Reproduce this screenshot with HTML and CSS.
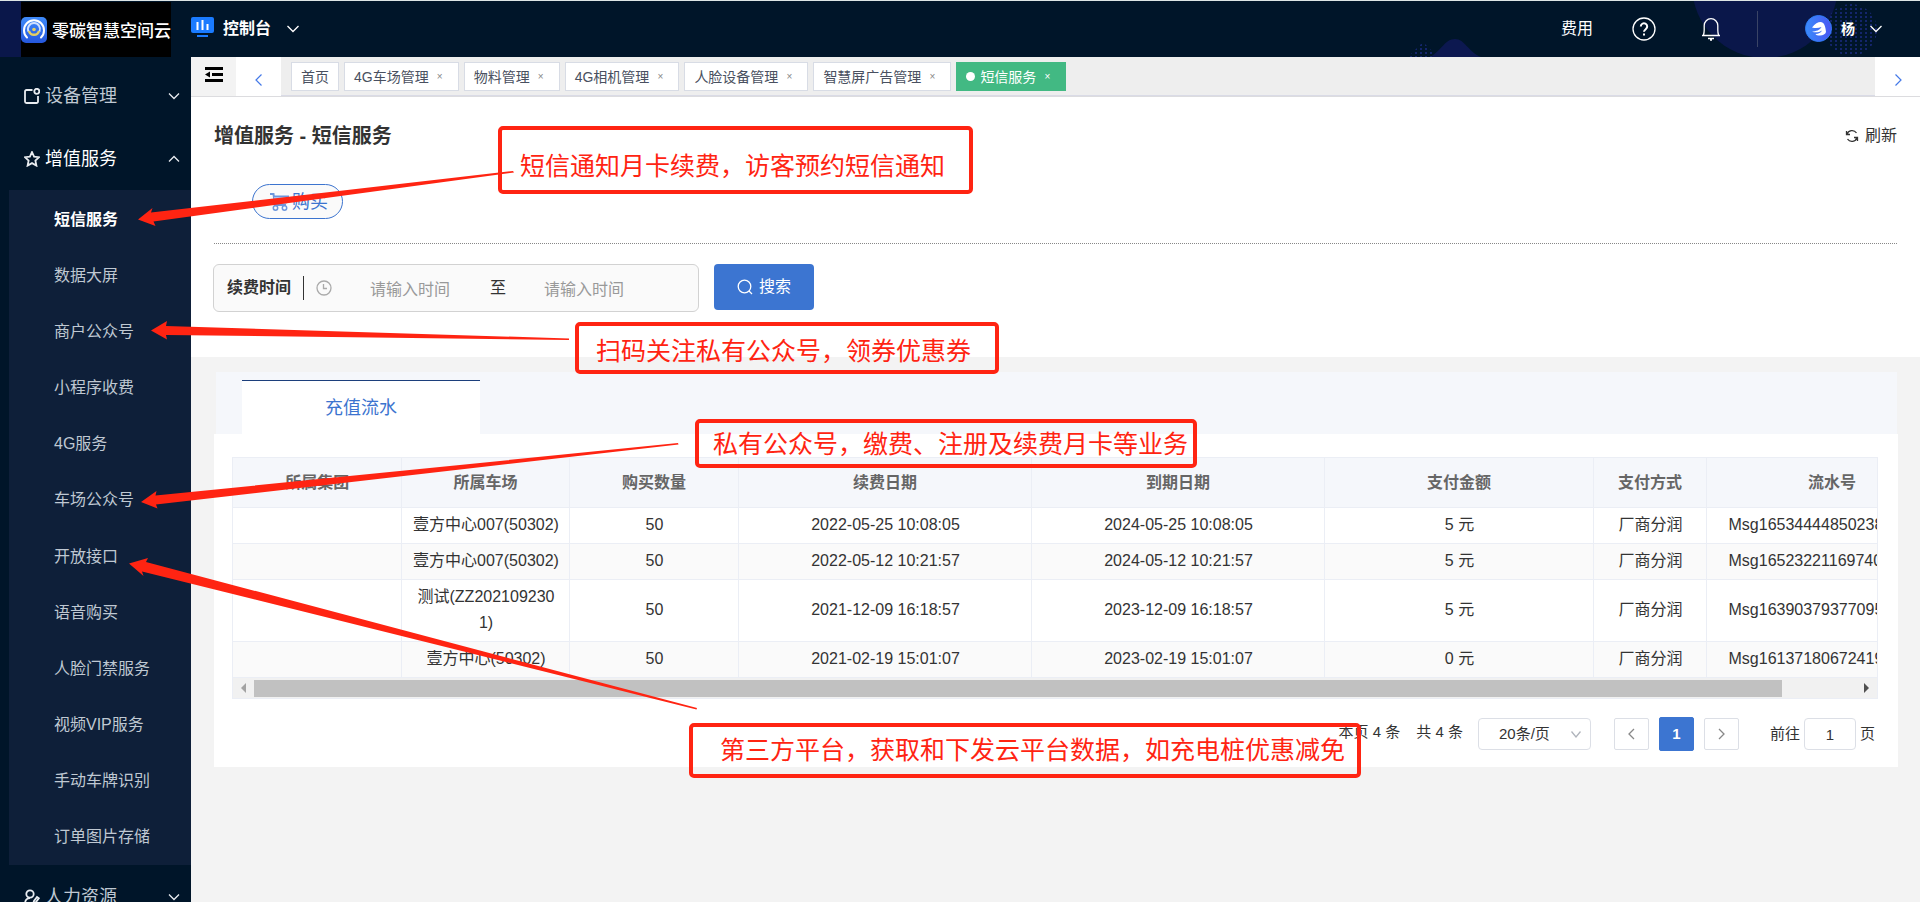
FILE: index.html
```html
<!DOCTYPE html>
<html lang="zh-CN">
<head>
<meta charset="utf-8">
<title>增值服务 - 短信服务</title>
<link rel="stylesheet" href="styles.css">
</head>
<body>
<header class="topbar">
  <svg class="topbar-art" width="520" height="56" viewBox="1400 1 520 56" aria-hidden="true">
    <defs>
      <pattern id="dots" width="5" height="4" patternUnits="userSpaceOnUse"><rect width="2" height="2" fill="#14256b"/></pattern>
    </defs>
    <circle cx="1765" cy="-15" r="73" fill="#0a174a"/>
    <path d="M1430 57C1442 50 1445 39 1455 39S1468 52 1481 57z" fill="#0c1850"/>
    <path d="M1408 57l15-15 12 12-3 3z" fill="url(#dots)"/>
    <circle cx="1851" cy="30" r="26" fill="url(#dots)"/>
  </svg>
  <div class="brand">
    <div class="brand-logo">
      <svg width="26" height="26" viewBox="0 0 26 26" aria-hidden="true">
        <defs><linearGradient id="mark" x1="0" y1="0" x2="0" y2="1"><stop offset="0" stop-color="#3f8bfa"/><stop offset="1" stop-color="#2557dd"/></linearGradient></defs>
        <rect width="26" height="26" rx="5" fill="url(#mark)"/>
        <path d="M6 20.500A10 10 0 1 1 20 20.500" fill="none" stroke="#fff" stroke-width="2" stroke-linecap="round"/>
        <path d="M7.500 14.500a6 6 0 1 1 11 0" fill="none" stroke="#cfe0ff" stroke-width="2"/>
        <path d="M8 14a5.200 5.200 0 0 0 10 0" fill="none" stroke="#e5cf62" stroke-width="2.500"/>
        <circle cx="13" cy="12.500" r="1.800" fill="#e5cf62"/>
      </svg>
      <span>零碳智慧空间云</span>
    </div>
  </div>
  <button class="console" type="button">
    <svg class="console-icon" width="23" height="20" viewBox="0 0 23 20" aria-hidden="true">
      <rect width="23" height="16" rx="2" fill="#1a7bff"/>
      <path d="M6.500 5v8M11.500 3v10M16.500 7v6" stroke="#fff" stroke-width="2"/>
      <path d="M6 19h11" stroke="#1a7bff" stroke-width="2"/>
    </svg>
    <span>控制台</span>
    <svg width="12" height="8" viewBox="0 0 12 8" class="line" aria-hidden="true"><path d="M0.500 1l5.500 5.500L11.500 1"/></svg>
  </button>
  <nav class="tools">
    <a class="fee" href="#">费用</a>
    <button type="button" class="plain help" aria-label="帮助">
      <svg width="24" height="24" viewBox="0 0 24 24" class="line" aria-hidden="true"><circle cx="12" cy="12" r="11"/><path d="M8.800 9.500a3.200 3.200 0 1 1 5 2.600c-1.200.9-1.800 1.300-1.800 2.700" stroke-width="2"/><path d="M12 16.500v2" stroke-width="2"/></svg>
    </button>
    <button type="button" class="plain bell" aria-label="通知">
      <svg width="20" height="24" viewBox="0 0 20 24" class="line" aria-hidden="true"><path d="M1 18.500h18M2.500 18c.4-1.500.7-3 .7-5V8.500a6.800 6.800 0 0 1 13.600 0V13c0 2 .3 3.500.7 5M7 21.500h6M9 23h2"/></svg>
    </button>
    <button type="button" class="plain user">
      <svg width="27" height="27" viewBox="0 0 27 27" aria-hidden="true">
        <defs><linearGradient id="face" x1="0" y1="0" x2="1" y2="0"><stop offset="0" stop-color="#3a8cfb"/><stop offset="1" stop-color="#4a55f2"/></linearGradient></defs>
        <circle cx="13.500" cy="13.500" r="13" fill="url(#face)" stroke="#2f7cf6"/>
        <path d="M7 12.500C10 8.500 13 7 15.500 7c3.500 0 5 4 5.500 10-.5 2-3 3.500-6 3.500-2.500 0-4-.5-4.500-1.500 3 0 5.500-1.500 6.500-3.500-3 2-7 2.500-10 1 4 0 8-1.500 9.500-4.500-3 1.200-6 1.500-9.500.5z" fill="#fff"/>
      </svg>
      <span>杨</span>
      <svg width="12" height="8" viewBox="0 0 12 8" class="line" aria-hidden="true"><path d="M0.500 1l5.500 5.500L11.500 1"/></svg>
    </button>
  </nav>
</header>

<div class="shell">
  <aside class="sidebar">
    <button type="button" class="group">
      <svg width="16" height="16" viewBox="0 0 16 16" class="line thick" aria-hidden="true"><path d="M8.500 2H2.500A1.500 1.500 0 0 0 1 3.500v10A1.500 1.500 0 0 0 2.500 15h10a1.500 1.500 0 0 0 1.500-1.500V8"/><circle cx="12.800" cy="3.300" r="2.500"/></svg>
      <span>设备管理</span>
      <svg width="12" height="8" viewBox="0 0 12 8" class="line" aria-hidden="true"><path d="M1 1.500l5 5 5-5"/></svg>
    </button>
    <button type="button" class="group open">
      <svg width="16" height="16" viewBox="0 0 16 16" class="line thick" aria-hidden="true"><path d="M8 1l2.100 4.600 5 .6-3.700 3.400 1 5L8 12.100l-4.400 2.500 1-5L.9 6.200l5-.6z"/></svg>
      <span>增值服务</span>
      <svg width="12" height="8" viewBox="0 0 12 8" class="line" aria-hidden="true"><path d="M1 6.500l5-5 5 5"/></svg>
    </button>
    <nav class="submenu">
      <a href="#" class="current">短信服务</a>
      <a href="#">数据大屏</a>
      <a href="#">商户公众号</a>
      <a href="#">小程序收费</a>
      <a href="#">4G服务</a>
      <a href="#">车场公众号</a>
      <a href="#">开放接口</a>
      <a href="#">语音购买</a>
      <a href="#">人脸门禁服务</a>
      <a href="#">视频VIP服务</a>
      <a href="#">手动车牌识别</a>
      <a href="#">订单图片存储</a>
    </nav>
    <button type="button" class="group">
      <svg width="16" height="16" viewBox="0 0 16 16" class="line thick" aria-hidden="true"><circle cx="6" cy="5" r="3.700"/><path d="M1 15c0-3.500 2-6 5-6M9 15l1-3 3-4 1.800 1.300-3 4z"/></svg>
      <span>人力资源</span>
      <svg width="12" height="8" viewBox="0 0 12 8" class="line" aria-hidden="true"><path d="M1 1.500l5 5 5-5"/></svg>
    </button>
  </aside>

  <main class="content">
    <div class="tabbar">
      <button type="button" class="plain fold" aria-label="收起菜单">
        <svg width="18" height="16" viewBox="0 0 18 16" aria-hidden="true"><path d="M0 0h18v3H0zM7 6h11v3H7zM0 12h18v3H0zM0 7.500L5 4.500v6z"/></svg>
      </button>
      <button type="button" class="plain scroll" aria-label="向左">
        <svg width="8" height="12" viewBox="0 0 8 12" aria-hidden="true"><path d="M6.500 .5L1 6l5.500 5.500"/></svg>
      </button>
      <div class="tabs">
        <a href="#" class="tab">首页</a>
        <a href="#" class="tab">4G车场管理<i>×</i></a>
        <a href="#" class="tab">物料管理<i>×</i></a>
        <a href="#" class="tab">4G相机管理<i>×</i></a>
        <a href="#" class="tab">人脸设备管理<i>×</i></a>
        <a href="#" class="tab">智慧屏广告管理<i>×</i></a>
        <a href="#" class="tab active">短信服务<i>×</i></a>
      </div>
      <button type="button" class="plain scroll" aria-label="向右">
        <svg width="8" height="12" viewBox="0 0 8 12" aria-hidden="true"><path d="M1.500 .5L7 6l-5.500 5.500"/></svg>
      </button>
    </div>

    <section class="head">
      <div class="title-row">
        <h1>增值服务 - 短信服务</h1>
        <button type="button" class="plain refresh">
          <svg width="14" height="14" viewBox="0 0 14 14" class="line" aria-hidden="true"><path d="M2 5.500A5.300 5.300 0 0 1 11.500 4M12 8.500A5.300 5.300 0 0 1 2.500 10M1.500 2v3.500H5M12.500 12V8.500H9"/></svg>
          刷新
        </button>
      </div>
      <div class="actions">
        <button type="button" class="buy">
          <svg width="19" height="18" viewBox="0 0 19 18" aria-hidden="true"><path d="M0 1h3.500l1.500 11h11M4 3.500h14L16 9.500H5" fill="none" stroke="#6c96dc" stroke-width="2"/><path d="M4 4h13l-1.500 5H5z" fill="#a9c3ee"/><circle cx="5.500" cy="15" r="2.200" fill="none" stroke="#6c96dc" stroke-width="1.500"/><circle cx="14.500" cy="15" r="2.200" fill="none" stroke="#6c96dc" stroke-width="1.500"/></svg>
          购买
        </button>
      </div>
      <form class="filter">
        <div class="range">
          <label for="from">续费时间</label>
          <svg width="16" height="16" viewBox="0 0 16 16" class="line" aria-hidden="true"><circle cx="8" cy="8" r="7"/><path d="M7.500 4v4.500H11"/></svg>
          <input id="from" type="text" placeholder="请输入时间">
          <span>至</span>
          <input type="text" placeholder="请输入时间" aria-label="结束时间">
        </div>
        <button type="button" class="search">
          <svg width="16" height="16" viewBox="0 0 16 16" class="line" aria-hidden="true"><circle cx="7.500" cy="7.500" r="6.300"/><path d="M12 12l3 3"/></svg>
          搜索
        </button>
      </form>
    </section>

    <section class="panel">
      <div class="panel-tabs"><a href="#" class="panel-tab">充值流水</a></div>
      <div class="panel-body">
        <div class="table-box">
          <table>
            <colgroup><col class="c1"><col class="c2"><col class="c3"><col class="c4"><col class="c4"><col class="c6"><col class="c7"><col class="c8"></colgroup>
            <thead><tr><th>所属集团</th><th>所属车场</th><th>购买数量</th><th>续费日期</th><th>到期日期</th><th>支付金额</th><th>支付方式</th><th>流水号</th></tr></thead>
            <tbody>
              <tr><td></td><td>壹方中心007(50302)</td><td>50</td><td>2022-05-25 10:08:05</td><td>2024-05-25 10:08:05</td><td>5 元</td><td>厂商分润</td><td class="serial">Msg1653444485023823</td></tr>
              <tr><td></td><td>壹方中心007(50302)</td><td>50</td><td>2022-05-12 10:21:57</td><td>2024-05-12 10:21:57</td><td>5 元</td><td>厂商分润</td><td class="serial">Msg1652322116974023</td></tr>
              <tr><td></td><td>测试(ZZ2021092301)</td><td>50</td><td>2021-12-09 16:18:57</td><td>2023-12-09 16:18:57</td><td>5 元</td><td>厂商分润</td><td class="serial">Msg1639037937709523</td></tr>
              <tr><td></td><td>壹方中心(50302)</td><td>50</td><td>2021-02-19 15:01:07</td><td>2023-02-19 15:01:07</td><td>0 元</td><td>厂商分润</td><td class="serial">Msg1613718067241923</td></tr>
            </tbody>
          </table>
          <div class="hscroll">
            <svg width="5" height="10" viewBox="0 0 5 10" aria-hidden="true"><path d="M5 0v10L0 5z" fill="#a3a3a3"/></svg>
            <div class="track"><div class="thumb"></div></div>
            <svg width="5" height="10" viewBox="0 0 5 10" aria-hidden="true"><path d="M0 0v10l5-5z" fill="#505050"/></svg>
          </div>
        </div>
        <div class="pager">
          <span class="count">本页 4 条</span>
          <span class="count total">共 4 条</span>
          <span class="size"><select aria-label="每页条数"><option>20条/页</option></select><svg width="10" height="7" viewBox="0 0 10 7" class="line" aria-hidden="true"><path d="M.5 .5L5 6l4.500-5.500"/></svg></span>
          <button type="button" class="page" aria-label="上一页"><svg width="7" height="12" viewBox="0 0 7 12" class="line" aria-hidden="true"><path d="M6 1L1 6l5 5"/></svg></button>
          <button type="button" class="page now">1</button>
          <button type="button" class="page" aria-label="下一页"><svg width="7" height="12" viewBox="0 0 7 12" class="line" aria-hidden="true"><path d="M1 1l5 5-5 5"/></svg></button>
          <label class="goto">前往 <input type="text" value="1"> 页</label>
        </div>
      </div>
    </section>
  </main>
</div>

<div class="notes">
  <svg class="arrows" width="720" height="720" viewBox="0 0 720 720" aria-hidden="true">
    <path d="M138 219.500L152.500 208l-1.500 4.500L513 171l1 1.500L153.500 221.500l2 4.500z"/>
    <path d="M151 330.500L167 321l-1 5 403 12.500v1.500L166 335l1 4.500z"/>
    <path d="M141 502L156.500 491l-1 4.500L678 443l.5 1.500L156 504.500l1.500 4z"/>
    <path d="M129 563.500L148 558l-2 4L697 708l-.5 1.500L142 571.500l1.500 4.500z"/>
  </svg>
  <div class="note n1">短信通知月卡续费，访客预约短信通知</div>
  <div class="note n2">扫码关注私有公众号，领券优惠券</div>
  <div class="note n3">私有公众号，缴费、注册及续费月卡等业务</div>
  <div class="note n4">第三方平台，获取和下发云平台数据，如充电桩优惠减免</div>
</div>
</body>
</html>
```
FILE: styles.css
```css
* { box-sizing: border-box; }
body {
  margin: 0;
  height: 100vh;
  overflow: hidden;
  position: relative;
  display: flex;
  flex-direction: column;
  background: #f3f3f3;
  color: #333;
  font: 16px/24px "Liberation Sans", "Noto Sans CJK SC", sans-serif;
}
a { color: inherit; text-decoration: none; }
button, input, select { font: inherit; color: inherit; margin: 0; }
button { cursor: pointer; }
svg { display: block; flex: none; }
.line { fill: none; stroke: currentColor; stroke-width: 1.3; }
.thick { stroke-width: 1.8; }
.plain { border: 0; padding: 0; background: none; }

/* top bar */
.topbar {
  position: relative;
  flex: none;
  height: 57px;
  display: flex;
  background: #001529;
  border-top: 1px solid #dde5e5;
  color: #fff;
}
.topbar-art { position: absolute; right: 0; top: 0; }
.brand { width: 191px; padding: 1px 0 0 21px; background: linear-gradient(90deg, #0a174a 21px, transparent 21px); }
.brand-logo {
  width: 150px;
  height: 55px;
  display: flex;
  align-items: center;
  gap: 5px;
  background: #000;
  font-size: 17px;
  font-weight: 500;
  white-space: nowrap;
}
.brand-logo span { padding-top: 4px; }
.console {
  display: flex;
  align-items: center;
  border: 0;
  background: none;
  padding: 0;
  height: 55px;
  font-weight: 700;
}
.console-icon { margin-bottom: 3px; }
.console span { margin: 0 16px 0 9px; }
.tools { position: relative; margin-left: auto; height: 55px; display: flex; align-items: center; padding-right: 38px; }
.help { margin-left: 39px; }
.bell { margin-left: 45px; }
.user {
  display: flex;
  align-items: center;
  height: 36px;
  margin-left: 36px;
  padding-left: 47px;
  border-left: 1px solid #3a4465;
  font-size: 14px;
  font-weight: 700;
}
.user span { margin: 0 15px 0 9px; }

.shell { flex: 1; min-height: 0; display: flex; }

/* side menu */
.sidebar { flex: none; width: 191px; padding-top: 7px; overflow: hidden; background: #001529; color: #bfc8d2; }
.group {
  width: 100%;
  height: 63px;
  display: flex;
  align-items: center;
  border: 0;
  padding: 0 11px 0 24px;
  background: none;
  font-size: 18px;
  text-align: left;
}
.group span { flex: 1; margin-left: 5px; }
.group.open { color: #fff; }
.group svg { color: #e8ecf0; }
.submenu { margin-left: 9px; height: 675px; padding-top: 1px; display: grid; background: #0e1f39; }
.submenu a { display: flex; align-items: center; padding: 1px 0 0 45px; }
.submenu .current { color: #fff; font-weight: 700; }

.content { flex: 1; min-width: 0; }

/* page tabs */
.tabbar { height: 40px; display: flex; background: #fff; border-bottom: 1px solid #dcdcdf; }
.fold { width: 45px; padding: 0 0 4px 14px; background: #f3f3f3; }
.scroll { width: 45px; padding: 6px 0 0 19px; background: #fff; }
.scroll path { fill: none; stroke: #4479e8; stroke-width: 1.2; }
.tabs { flex: 1; display: flex; gap: 5px; padding: 5px 0 0 10px; background: #eee; border-bottom: 1px solid #dadbe6; }
.tab {
  display: flex;
  height: 29px;
  align-items: center;
  gap: 8px;
  padding: 0 9px;
  border: 1px solid #d8dce5;
  background: #fff;
  color: #495060;
  font-size: 14px;
  white-space: nowrap;
}
.tab i { width: 12px; font-style: normal; font-size: 10px; color: #888; }
.tab.active { background: #42b983; border-color: #42b983; color: #fff; }
.tab.active i { color: #fff; }
.tab.active::before { content: ""; width: 9px; height: 9px; margin-right: -3px; border-radius: 50%; background: #fff; }

/* heading and filter */
.head { height: 260px; padding: 27px 23px 0; background: #fff; }
.title-row { display: flex; justify-content: space-between; align-items: center; }
h1 { margin: 0; font-size: 20px; line-height: 24px; font-weight: 700; }
.refresh { display: flex; align-items: center; gap: 6px; }
.actions { padding: 36px 0 24px 38px; border-bottom: 1px dotted #888; }
.buy {
  display: flex;
  align-items: center;
  gap: 3px;
  height: 35px;
  padding: 1px 14px 0 17px;
  border: 1px solid #3c74cf;
  border-radius: 18px;
  background: #fafafa;
  color: #3c74cf;
  font-size: 18px;
}
.filter { display: flex; gap: 15px; margin: 20px 0 0 -1px; }
.range {
  width: 486px;
  height: 48px;
  display: flex;
  align-items: center;
  padding-left: 13px;
  border: 1px solid #d2d2d2;
  border-radius: 6px;
  background: #fafafa;
}
.range label { padding-right: 12px; border-right: 1px solid #333; font-weight: 700; }
.range svg { margin-left: 12px; color: #aaa; }
.range input { width: 158px; padding: 3px 2px 0 0; border: 0; background: none; text-align: center; outline: 0; }
.range input::placeholder { color: #999; }
.search {
  width: 100px;
  height: 46px;
  display: flex;
  align-items: center;
  justify-content: center;
  gap: 6px;
  border: 0;
  border-radius: 4px;
  background: #3c75d1;
  color: #fff;
}

/* records */
.panel { padding: 15px 22px 0 23px; }
.panel-tabs { height: 62px; margin: 0 1px 0 2px; padding: 8px 0 0 26px; background: #f5f7fb; }
.panel-tab {
  display: flex;
  align-items: center;
  justify-content: center;
  width: 238px;
  height: 54px;
  border-top: 1px solid #1c3f7c;
  background: #fff;
  color: #3c74cf;
  font-size: 18px;
}
.panel-body { padding: 23px 20px 16px 18px; background: #fff; }
.table-box { overflow: hidden; border: 1px solid #ebeef5; }
table { table-layout: fixed; width: 1724px; border-collapse: collapse; text-align: center; line-height: 26px; }
.c1 { width: 168px; }
.c2 { width: 168px; }
.c3 { width: 169px; }
.c4 { width: 293px; }
.c6 { width: 269px; }
.c7 { width: 113px; }
.c8 { width: 251px; }
th, td { border: 1px solid #ebeef5; border-top: 0; border-left: 0; padding: 4px 8px 5px 10px; word-break: break-all; }
th { padding: 12px 0 11px 1px; background: #f5f7fb; color: #666; font-weight: 700; }
tbody tr:nth-child(even) { background: #fafafa; }
td { height: 36px; }
td.serial { padding-left: 22px; text-align: left; }
.hscroll { display: flex; align-items: center; gap: 10px; height: 20px; padding: 0 8px; background: #f1f1f1; }
.track { flex: 1; margin: 0 -2px 0 -2px; }
.thumb { width: 95.4%; height: 17px; background: #c1c1c1; }
.pager { display: flex; align-items: center; justify-content: flex-end; margin-top: 18px; font-size: 15px; padding-right: 3px; }
.count { padding-bottom: 4px; }
.total { margin: 0 15px 0 16px; }
.size { display: flex; align-items: center; margin-right: 23px; }
.size select { appearance: none; width: 113px; height: 32px; padding: 0 20px; border: 1px solid #dcdfe6; border-radius: 4px; background: #fff; }
.size svg { margin-left: -20px; margin-right: 10px; color: #b0b4bc; pointer-events: none; }
.page {
  width: 35px;
  height: 32px;
  display: flex;
  align-items: center;
  justify-content: center;
  border: 1px solid #dcdfe6;
  border-radius: 2px;
  background: #fff;
  padding: 0;
  color: #888;
}
.page.now { height: 34px; margin: 0 10px; border-color: #3c75d1; background: #3c75d1; color: #fff; font-weight: 700; }
.goto { display: flex; align-items: center; gap: 4px; margin-left: 31px; }
.goto input { width: 52px; height: 32px; padding: 0; border: 1px solid #dcdfe6; border-radius: 4px; text-align: center; }

/* callouts drawn over the page */
.notes { position: absolute; inset: 0; pointer-events: none; color: #ff2412; }
.arrows { position: absolute; left: 0; top: 0; fill: #ff2412; }
.note {
  position: absolute;
  padding: 0 17px;
  border: 4px solid #ff2412;
  border-radius: 5px;
  font-size: 25px;
  line-height: 36px;
  white-space: nowrap;
}
.n1 { left: 498px; top: 126px; width: 475px; padding: 18px 18px 6px; }
.n2 { left: 575px; top: 322px; width: 424px; padding-top: 7px; padding-bottom: 1px; }
.n3 { left: 695px; top: 419px; width: 502px; padding: 3px 14px 2px; }
.n4 { left: 689px; top: 723px; width: 672px; padding: 5px 27px 6px; }
```
